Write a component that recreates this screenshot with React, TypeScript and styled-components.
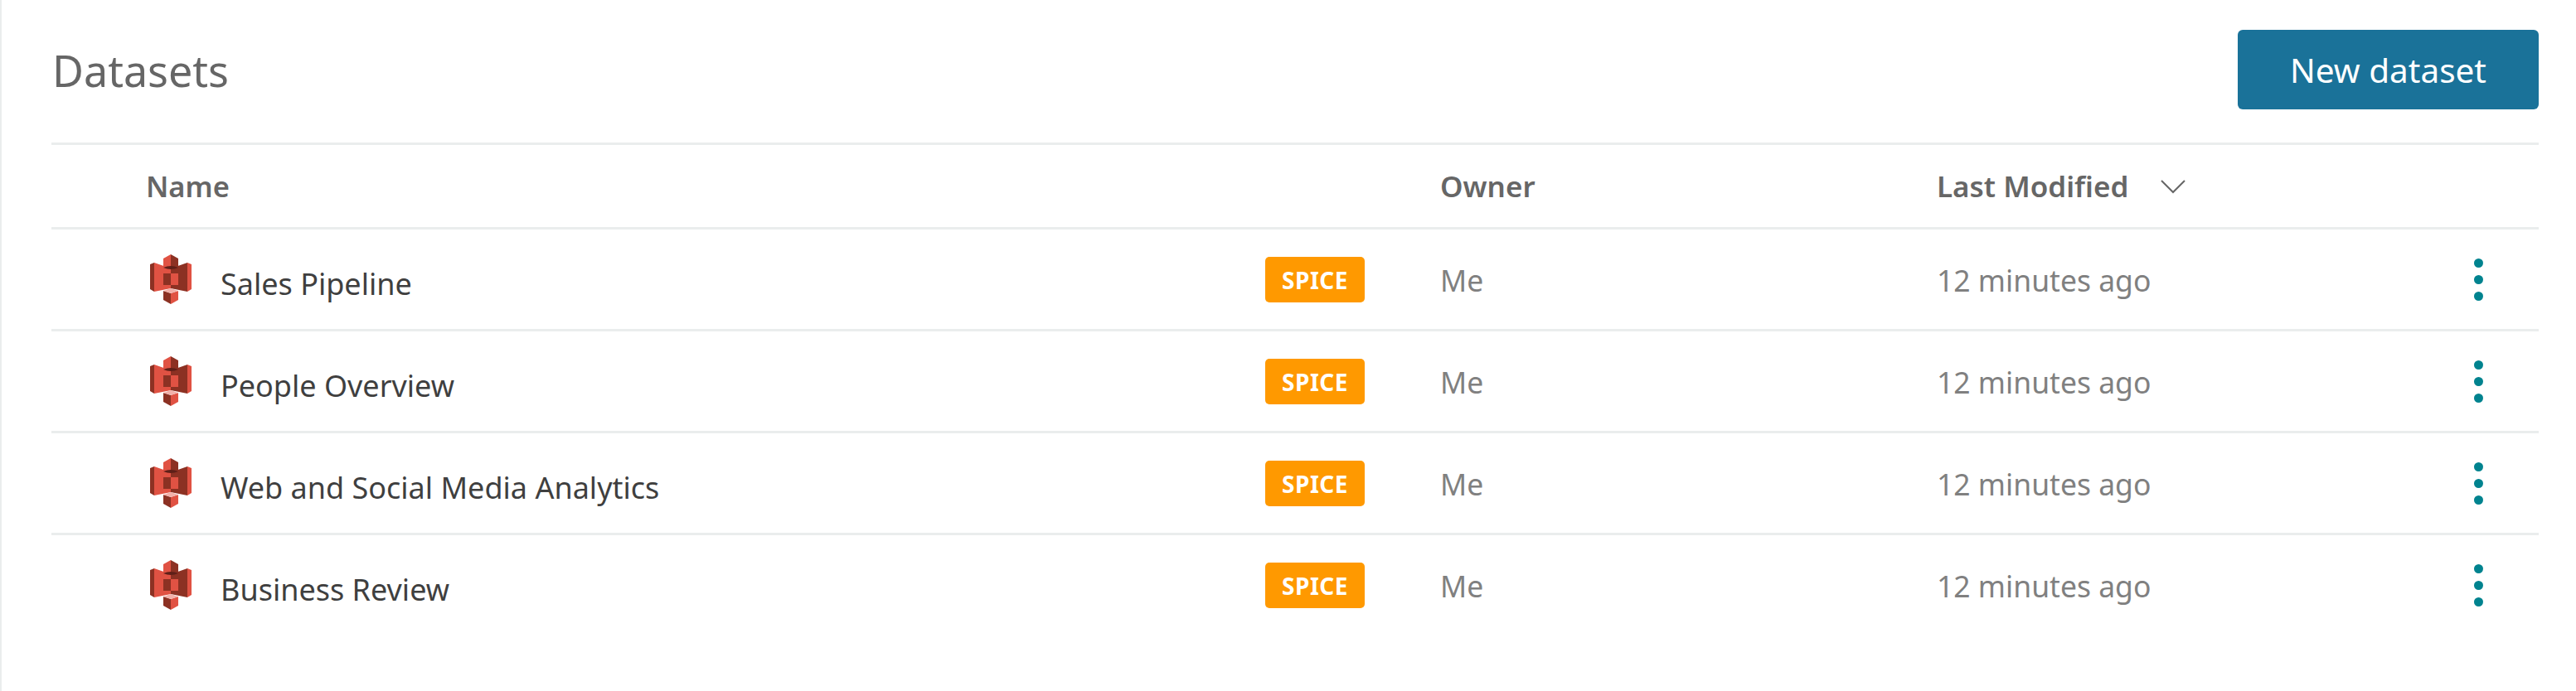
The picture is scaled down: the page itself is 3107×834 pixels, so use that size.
import styled, { createGlobalStyle } from "styled-components";

const GlobalStyle = createGlobalStyle`
  body {
    margin: 0;
    background: #fff;
    font-family: "Noto Sans", "Liberation Sans", sans-serif;
  }
`;

const Page = styled.div`
  box-sizing: border-box;
  min-height: 834px;
  padding: 36px 45px 0 60px;
  border-left: 2px solid #eaeded;
`;

const TopBar = styled.div`
  display: flex;
  justify-content: space-between;
  align-items: center;
  height: 96px;
  margin-bottom: 40px;
`;

const Title = styled.h1`
  margin: 0;
  padding-left: 1px;
  font-size: 52px;
  font-weight: 400;
  color: #666;
`;

const NewButton = styled.button`
  width: 363px;
  height: 96px;
  padding: 0;
  border: 0;
  border-radius: 6px;
  background: #1a7299;
  color: #fff;
  font-family: inherit;
  font-size: 40.5px;
  cursor: pointer;
`;

const Row = styled.div`
  display: grid;
  grid-template-columns: 1464px 211px 601px 1fr 78px;
  align-items: center;
  height: 120px;
  border-top: 3px solid #eaeded;
`;

const HeaderRow = styled(Row)`
  height: 99px;
`;

const HeadCell = styled.div`
  display: flex;
  align-items: center;
  gap: 38px;
  font-size: 35px;
  font-weight: 600;
  color: #666;
`;

const NameHead = styled(HeadCell)`
  padding-left: 114px;
  font-size: 34.5px;
`;

const ModifiedHead = styled(HeadCell)`
  margin-left: -2px;
`;

const NameCell = styled.div`
  display: flex;
  align-items: center;
  gap: 35px;
  padding-left: 119px;
`;

const Name = styled.span`
  padding-top: 10px;
  font-size: 36px;
  color: #3f3f3f;
`;

const Badge = styled.span`
  display: flex;
  justify-content: center;
  align-items: center;
  width: 120px;
  height: 55px;
  margin-top: 1px;
  border-radius: 5px;
  background: #ff9900;
  color: #fff;
  font-size: 28px;
  font-weight: 700;
  letter-spacing: 0.5px;
`;

const Muted = styled.span`
  padding-top: 2px;
  font-size: 35.5px;
  color: #808080;
`;

const ModifiedText = styled(Muted)`
  margin-left: -2px;
`;

const Dots = styled.button`
  display: flex;
  flex-direction: column;
  align-items: center;
  gap: 9px;
  width: 11px;
  padding: 0;
  border: 0;
  background: none;
  cursor: pointer;
  span {
    width: 11px;
    height: 11px;
    border-radius: 50%;
    background: #00838f;
  }
`;

function BucketIcon() {
  return (
    <svg width="50" height="60" viewBox="0 0 50 60">
      {/* wings, filling behind the centre column */}
      <path d="M5 10 25 17V41L5 45Z" fill="#e05243" />
      <path d="M45 10 25 17V41L45 45Z" fill="#8c3123" />
      <path d="M0 12 5 10V45L0 42Z" fill="#8c3123" />
      <path d="M45 10 50 12V42L45 45Z" fill="#e05243" />
      {/* top block */}
      <path d="M25 0 16 5V17L25 20Z" fill="#e05243" />
      <path d="M25 0 34 5V17L25 20Z" fill="#8c3123" />
      <path d="M16 16Q25 12 34 16Q25 20 16 16Z" fill="#5e1f18" />
      {/* middle block */}
      <path d="M16 23H25V37H16Z" fill="#8c3123" />
      <path d="M25 23H34V37H25Z" fill="#e05243" />
      {/* bottom block */}
      <path d="M16 44 25 47V60L16 55Z" fill="#8c3123" />
      <path d="M34 44 25 47V60L34 55Z" fill="#e05243" />
      <path d="M16 44 25 41 34 44 25 47Z" fill="#f2b0a9" />
    </svg>
  );
}

const datasets = [
  "Sales Pipeline",
  "People Overview",
  "Web and Social Media Analytics",
  "Business Review",
];

export default function App() {
  return (
    <>
      <GlobalStyle />
      <Page>
        <TopBar>
          <Title>Datasets</Title>
          <NewButton>New dataset</NewButton>
        </TopBar>
        <HeaderRow>
          <NameHead>Name</NameHead>
          <div />
          <HeadCell>Owner</HeadCell>
          <ModifiedHead>
            Last Modified
            <svg width="32" height="18" viewBox="0 0 32 18">
              <path d="M2 2 16 16 30 2" fill="none" stroke="#666" strokeWidth="2" />
            </svg>
          </ModifiedHead>
          <div />
        </HeaderRow>
        {datasets.map((name) => (
          <Row key={name}>
            <NameCell>
              <BucketIcon />
              <Name>{name}</Name>
            </NameCell>
            <div>
              <Badge>SPICE</Badge>
            </div>
            <Muted>Me</Muted>
            <ModifiedText>12 minutes ago</ModifiedText>
            <Dots>
              <span />
              <span />
              <span />
            </Dots>
          </Row>
        ))}
      </Page>
    </>
  );
}
